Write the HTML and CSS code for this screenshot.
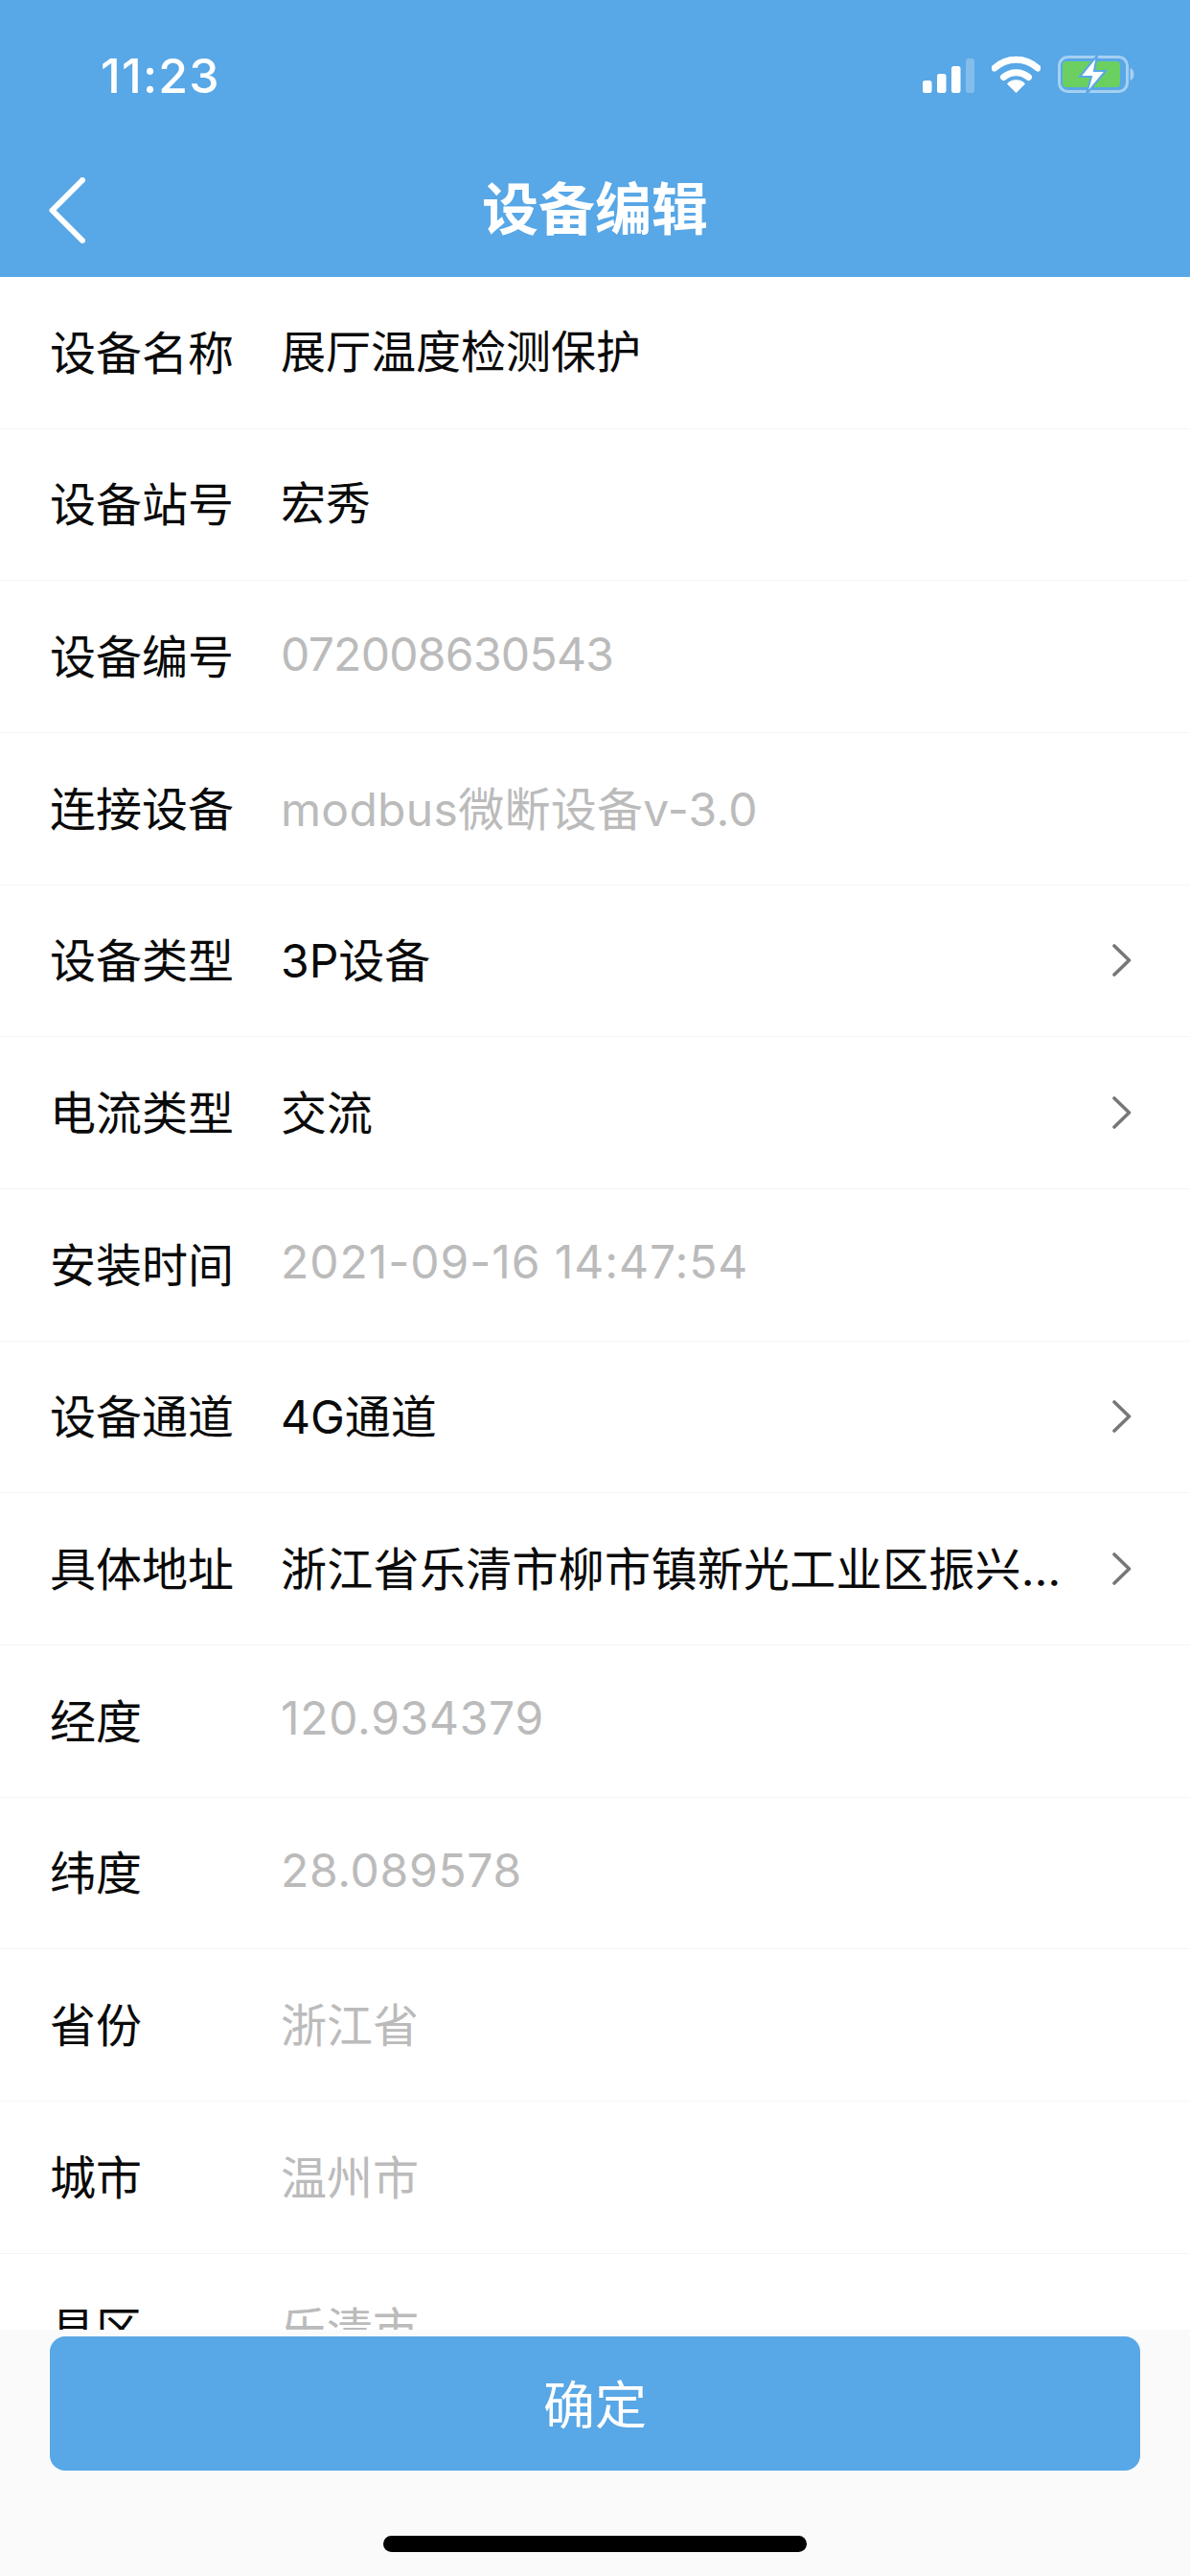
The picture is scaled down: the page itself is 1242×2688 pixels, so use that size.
FILE: index.html
```html
<!DOCTYPE html>
<html lang="zh-CN">
<head>
    <meta charset="UTF-8">
    <meta name="viewport" content="width=device-width, initial-scale=1.0">
    <title>设备编辑</title>
    <link rel="stylesheet" href="styles.css">
</head>
<body>
    <div class="page">
        <header class="header">
            <div class="status-bar">
                <span class="time">11:23</span>
                <div class="status-icons">
                    <svg class="signal" width="54" height="36" viewBox="0 0 54 36">
                        <rect x="0" y="23" width="9.5" height="13" rx="2.5" fill="#fff"/>
                        <rect x="15" y="16" width="9.5" height="20" rx="2.5" fill="#fff"/>
                        <rect x="30" y="8" width="9.5" height="28" rx="2.5" fill="#fff"/>
                        <rect x="45" y="0" width="9" height="36" rx="2.5" fill="#fff" opacity="0.25"/>
                    </svg>
                    <svg class="wifi" width="51" height="39" viewBox="0 0 51 39">
                        <path d="M3 13 A33 33 0 0 1 48 13" fill="none" stroke="#fff" stroke-width="7" stroke-linecap="round"/>
                        <path d="M12.5 22.5 A20 20 0 0 1 38.5 22.5" fill="none" stroke="#fff" stroke-width="7" stroke-linecap="round"/>
                        <path d="M25.5 39 L16 29.5 A13 13 0 0 1 35 29.5 Z" fill="#fff"/>
                    </svg>
                    <svg class="battery" width="80" height="40" viewBox="0 0 80 40">
                        <rect x="1.5" y="1.5" width="71" height="36" rx="9" fill="none" stroke="#a5d0f2" stroke-width="3"/>
                        <rect x="5" y="6" width="60" height="27" rx="4" fill="#6bd05f"/>
                        <path d="M75.5 13 C78.5 14 79.5 16.5 79.5 19.5 C79.5 22.5 78.5 25 75.5 26 Z" fill="#a5d0f2"/>
                        <path d="M41 0 L23 22 L35 22 L30 40 L50 16 L38 16 Z" fill="#fff" stroke="#58a7e6" stroke-width="2"/>
                    </svg>
                </div>
            </div>
            <div class="nav-bar">
                <svg class="back" width="38" height="69" viewBox="0 0 38 69">
                    <path d="M35 3 L3.5 34.5 L35 66" fill="none" stroke="#fff" stroke-width="6" stroke-linecap="round" stroke-linejoin="round"/>
                </svg>
                <h1 class="title">设备编辑</h1>
            </div>
        </header>

        <div class="list">
            <div class="row"><span class="label">设备名称</span><span class="value input">展厅温度检测保护</span></div>
            <div class="row"><span class="label">设备站号</span><span class="value input">宏秀</span></div>
            <div class="row"><span class="label">设备编号</span><span class="value muted tight">072008630543</span></div>
            <div class="row"><span class="label">连接设备</span><span class="value muted slight">modbus微断设备v-3.0</span></div>
            <div class="row"><span class="label">设备类型</span><span class="value">3P设备</span>
                <svg class="chevron" width="20" height="34" viewBox="0 0 20 34"><path d="M2 2 L17.5 17 L2 32" fill="none" stroke="#777" stroke-width="3.6" stroke-linecap="round" stroke-linejoin="round"/></svg>
            </div>
            <div class="row"><span class="label">电流类型</span><span class="value">交流</span>
                <svg class="chevron" width="20" height="34" viewBox="0 0 20 34"><path d="M2 2 L17.5 17 L2 32" fill="none" stroke="#777" stroke-width="3.6" stroke-linecap="round" stroke-linejoin="round"/></svg>
            </div>
            <div class="row"><span class="label">安装时间</span><span class="value muted wider">2021-09-16 14:47:54</span></div>
            <div class="row"><span class="label">设备通道</span><span class="value">4G通道</span>
                <svg class="chevron" width="20" height="34" viewBox="0 0 20 34"><path d="M2 2 L17.5 17 L2 32" fill="none" stroke="#777" stroke-width="3.6" stroke-linecap="round" stroke-linejoin="round"/></svg>
            </div>
            <div class="row"><span class="label">具体地址</span><span class="value slight">浙江省乐清市柳市镇新光工业区振兴路88号</span>
                <svg class="chevron" width="20" height="34" viewBox="0 0 20 34"><path d="M2 2 L17.5 17 L2 32" fill="none" stroke="#777" stroke-width="3.6" stroke-linecap="round" stroke-linejoin="round"/></svg>
            </div>
            <div class="row"><span class="label">经度</span><span class="value muted wide">120.934379</span></div>
            <div class="row"><span class="label">纬度</span><span class="value muted wide">28.089578</span></div>
            <div class="row"><span class="label">省份</span><span class="value muted">浙江省</span></div>
            <div class="row"><span class="label">城市</span><span class="value muted">温州市</span></div>
            <div class="row"><span class="label">县区</span><span class="value muted">乐清市</span></div>
        </div>

        <footer class="footer">
            <button class="confirm" type="button">确定</button>
            <div class="home-bar"></div>
        </footer>
    </div>
</body>
</html>
```

FILE: styles.css
```css
* {
    box-sizing: border-box;
}
body {
    margin: 0;
    font-family: "Inter", "Noto Sans CJK SC", sans-serif;
    background-color: #fff;
}
.page {
    display: flex;
    flex-direction: column;
    width: 1242px;
    height: 2688px;
    overflow: hidden;
}
.header {
    flex: none;
    height: 289px;
    background-color: #58a7e6;
    color: #fff;
}
.status-bar {
    display: flex;
    justify-content: space-between;
    align-items: flex-start;
    height: 148px;
    padding: 58px 58px 0 105px;
}
.time {
    font-size: 50px;
    line-height: 42px;
    font-weight: 500;
    letter-spacing: 1.2px;
}
.status-icons {
    display: flex;
    align-items: flex-end;
    gap: 18px;
}
.signal, .wifi {
    margin-bottom: 1px;
}
.nav-bar {
    position: relative;
    display: flex;
    justify-content: center;
    align-items: center;
    height: 141px;
}
.back {
    position: absolute;
    left: 51px;
    top: 37px;
}
.title {
    margin: 0;
    font-size: 59px;
    line-height: 80px;
    font-weight: 700;
}
.list {
    flex: 1;
    min-height: 0;
    overflow: hidden;
}
.row {
    display: flex;
    align-items: center;
    height: 158.67px;
    padding: 0 61px 6px 52px;
    border-bottom: 1px solid #f5f5f5;
    font-size: 48px;
}
.label {
    flex: none;
    width: 241px;
    color: #0a0a0a;
}
.value {
    flex: 1;
    min-width: 0;
    white-space: nowrap;
    overflow: hidden;
    text-overflow: ellipsis;
    color: #0a0a0a;
}
.input {
    font-size: 47px;
    margin-bottom: 3px;
}
.muted {
    color: #bbb;
}
.tight {
    letter-spacing: -0.7px;
}
.slight {
    letter-spacing: 0.3px;
}
.wide {
    letter-spacing: 0.7px;
}
.wider {
    letter-spacing: 0.95px;
}
.chevron {
    flex: none;
    margin-left: 46px;
    margin-top: 6px;
}
.footer {
    flex: none;
    height: 257px;
    padding: 7px 52px 0;
    background-color: #fafafa;
}
.confirm {
    display: block;
    width: 100%;
    height: 140px;
    padding: 0 0 3px;
    border: none;
    border-radius: 16px;
    background-color: #58a7e6;
    color: #fff;
    font-family: inherit;
    font-size: 54px;
}
.home-bar {
    width: 442px;
    height: 17px;
    margin: 68px auto 0;
    border-radius: 9px;
    background-color: #000;
}
```
